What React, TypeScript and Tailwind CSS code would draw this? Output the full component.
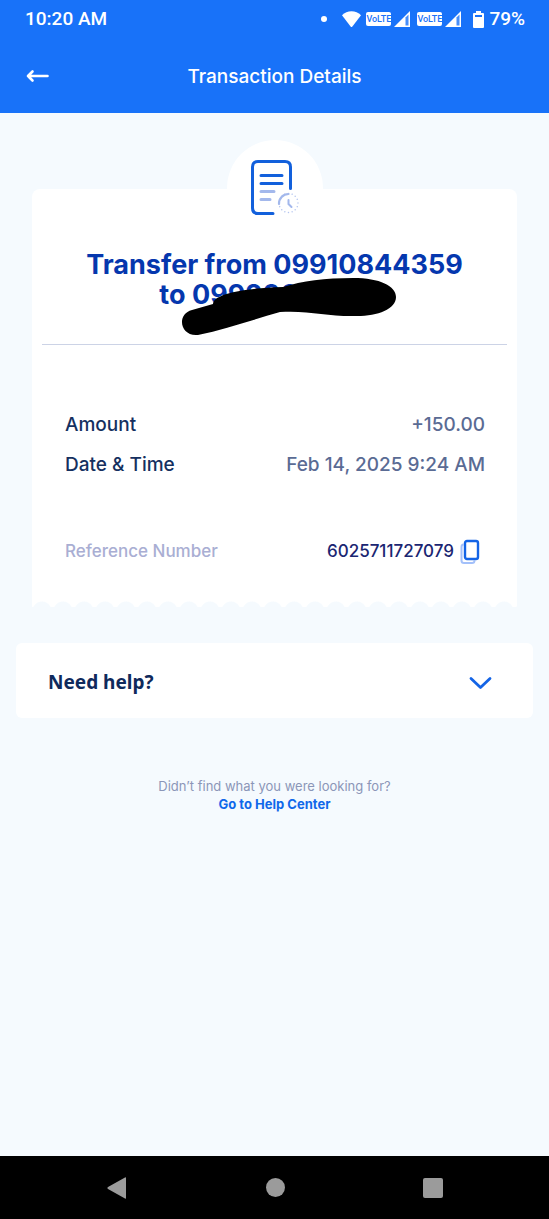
import React from 'react';

const details = [
  { label: 'Amount', value: '+150.00' },
  { label: 'Date & Time', value: 'Feb 14, 2025 9:24 AM' },
];

const VolteSignal: React.FC = () => (
  <span className="flex items-center gap-0.5">
    <span className="flex h-3.5 w-[25px] items-center justify-center rounded-xs bg-white font-[Roboto] text-[9px]/[16px] font-medium text-[#1872f9]">
      VoLTE
    </span>
    <svg width="18" height="18" viewBox="0 0 18 18" aria-hidden="true">
      <path d="M1 17 17 1v16z" fill="#fff" />
      <path d="M12.5 7.500 15.500 4.500v11h-3z" fill="#1872f9" opacity=".8" />
    </svg>
  </span>
);

const StatusBar: React.FC = () => (
  <div className="flex h-[38px] items-center justify-between pl-[25px] pr-6 font-[Roboto] text-[19px] font-medium">
    <span>10:20 AM</span>
    <div className="flex items-center">
      <span className="mr-3.5 size-1.5 rounded-full bg-white" />
      <svg className="mr-1" width="21" height="18" viewBox="0 0 21 18" aria-hidden="true">
        <path d="M1 5.200C6 0 15 0 20 5.200L11.400 16.400q-.9 1-1.800 0z" fill="#fff" />
      </svg>
      <div className="mr-2.5 flex gap-1.5">
        <VolteSignal />
        <VolteSignal />
      </div>
      <svg className="mr-1" width="13" height="19" viewBox="0 0 13 19" aria-hidden="true">
        <path d="M4 1h5v2h2q1 0 1 1v13q0 1-1 1H2q-1 0-1-1V4q0-1 1-1h2z" fill="#fff" />
        <path d="M3 5h7v2H3z" fill="#1872f9" />
      </svg>
      <span>79%</span>
    </div>
  </div>
);

const ReceiptIcon: React.FC = () => (
  <svg width="54" height="60" viewBox="0 0 54 60" fill="none" strokeLinecap="round" aria-hidden="true">
    <path
      d="M25 55.500H10q-5.500 0-5.500-5.500V9q0-5.500 5.500-5.500h27q5.500 0 5.500 5.500v21.500"
      stroke="#1260dc"
      strokeWidth="3"
    />
    <path d="M13 17.500h21M13 25.500h21" stroke="#1260dc" strokeWidth="3" />
    <path d="M13 33.500h13M13 41.500h9" stroke="#a3b8ec" strokeWidth="3" />
    <circle cx="40.500" cy="45" r="9.500" stroke="#b3c4ef" strokeWidth="1.400" strokeDasharray=".1 3.600" />
    <path d="M31 46a9.500 9.500 0 0 1 9.500-10" stroke="#a3b8ec" strokeWidth="2.200" />
    <path d="M40.500 42v4l3 3" stroke="#a3b8ec" strokeWidth="2" />
  </svg>
);

const CopyIcon: React.FC = () => (
  <svg width="20" height="26" viewBox="0 0 20 26" fill="none" aria-hidden="true">
    <path d="M3.500 5.500Q1.500 5.500 1.500 8v13.500q0 2.500 2.500 2.500h8q2.500 0 2.500-2.500" stroke="#a3c0fa" strokeWidth="2" />
    <rect x="5" y="2" width="13" height="18" rx="2" stroke="#1464e6" strokeWidth="2.400" />
  </svg>
);

export default function App() {
  return (
    <div className="flex min-h-screen flex-col bg-[#f5fafe] font-[Inter,sans-serif]">
      <header className="bg-[#1872f9] text-white">
        <StatusBar />
        <div className="grid h-[75px] grid-cols-[48px_1fr_48px] items-center px-6">
          <button type="button" aria-label="Back" className="flex">
            <svg width="26" height="16" viewBox="0 0 26 16" fill="none" stroke="#fff" strokeWidth="2.600" strokeLinecap="round" strokeLinejoin="round" aria-hidden="true">
              <path d="M23.500 8H4M8.500 3.500 4 8l4.500 4.500" />
            </svg>
          </button>
          <h1 className="pt-1 text-center text-[19px] font-medium">Transaction Details</h1>
        </div>
      </header>

      <main className="flex-1">
        <section className="mx-8 mt-[27px]">
          <div className="mx-auto -mb-[47px] flex size-24 items-center justify-center rounded-full bg-white">
            <ReceiptIcon />
          </div>
          <div className="rounded-t-lg bg-white pt-[61px]">
            <h2 className="relative text-center text-[27px]/[30px] font-bold text-[#0537ae]">
              Transfer from 09910844359
              <br />
              to 09920000000
              {/* marker stroke hiding the recipient */}
              <svg className="absolute top-5 left-1/2 -translate-x-1/2" width="250" height="70" viewBox="150 270 250 70" aria-hidden="true">
                <path d="M192 310 213 304Q213 301 217 298C229 291 253 288 283 287C302 281 325 278 353 278C380 278 396 286 396 297C396 309 378 316 357 316C329 317 309 310 280 312C252 320 226 329 198 335C180 337 176 314 192 310Z" />
              </svg>
            </h2>
            <hr className="mx-2.5 mt-[34px] border-[#ccd3e6]" />
            <dl className="px-8 pt-[60px]">
              {details.map((item) => (
                <div key={item.label} className="flex h-10 items-center justify-between pl-px text-[19px] font-medium">
                  <dt className="text-[#15305f]">{item.label}</dt>
                  <dd className="text-[#5a6b94]">{item.value}</dd>
                </div>
              ))}
              <div className="mt-[47px] flex h-10 items-center justify-between pl-px">
                <dt className="text-[17px] font-medium text-[#a9aed3]">Reference Number</dt>
                <dd className="flex items-center gap-1.5 pr-[5px] text-[17px] font-medium text-[#1b2672]">
                  6025711727079
                  <button type="button" aria-label="Copy reference number">
                    <CopyIcon />
                  </button>
                </dd>
              </div>
            </dl>
            <div className="mt-[29px] h-1.5 bg-[radial-gradient(circle_at_10px_10px,#f5fafe_9px,transparent_10px)] bg-[length:21px_6px] bg-repeat-x" />
          </div>
        </section>

        <button type="button" className="mx-4 mt-9 flex h-[75px] w-[calc(100%-32px)] items-center justify-between rounded-md bg-white pt-1 pr-10 pl-8">
          <span className="font-['Noto_Sans',sans-serif] text-[19px] font-bold text-[#0f2a5c]">Need help?</span>
          <svg width="26" height="16" viewBox="0 0 26 16" fill="none" stroke="#1464e6" strokeWidth="2.800" strokeLinecap="round" strokeLinejoin="round" aria-hidden="true">
            <path d="m4 3.500 9.500 9 9.500-9" />
          </svg>
        </button>

        <div className="mt-[59px] text-center text-[13px]/[18px]">
          <p className="text-[#8b96b8]">Didn’t find what you were looking for?</p>
          <a href="#help" className="block font-bold text-[#1068ea]">Go to Help Center</a>
        </div>
      </main>

      <nav className="flex h-[63px] items-center justify-around bg-black px-[37px]">
        <button type="button" aria-label="Back">
          <svg width="22" height="24" viewBox="0 0 22 24" aria-hidden="true">
            <path d="M19 1.500q1-.6 1 .5v20q0 1.100-1 .5L2 13q-1.500-1 0-2z" fill="#9b9b9b" />
          </svg>
        </button>
        <button type="button" aria-label="Home" className="size-[19px] rounded-full bg-[#9b9b9b]" />
        <button type="button" aria-label="Recent apps" className="size-5 rounded-xs bg-[#9b9b9b]" />
      </nav>
    </div>
  );
}
